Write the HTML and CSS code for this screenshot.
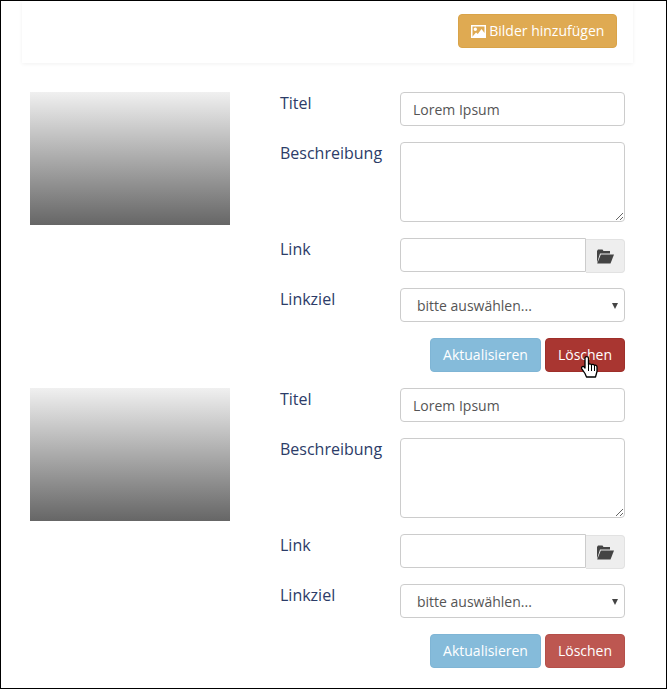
FILE: index.html
```html
<!DOCTYPE html>
<html lang="de">
<head>
  <meta charset="UTF-8">
  <meta name="viewport" content="width=device-width, initial-scale=1.0">
  <title>Bilder</title>
  <link rel="stylesheet" href="styles.css">
</head>
<body>
  <div class="frame">
    <div class="card">
      <button type="button" class="btn btn-add">
        <svg class="icon-picture" viewBox="0 0 15 13" width="15" height="13">
          <path fill="#fff" fill-rule="evenodd" d="M0 0h15v13H0zM1.500 1.500v10h12v-10zM2 11l3-3.500 1.800 1.600L10.500 4l3 4v3.500H2zM4.300 2.500a1.700 1.700 0 1 1 0 3.400a1.700 1.700 0 0 1 0-3.400z"/>
        </svg>
        Bilder hinzufügen
      </button>
    </div>

    <div class="item">
      <div class="thumb"></div>
      <form class="fields">
        <label>Titel</label>
        <input type="text" class="control" value="Lorem Ipsum">
        <label>Beschreibung</label>
        <textarea class="control control-area"></textarea>
        <label>Link</label>
        <div class="input-group">
          <input type="text" class="control">
          <span class="addon">
            <svg viewBox="0 0 18 15" width="18" height="15">
              <path fill="#444" d="M1 14V2L2 .5h4.500l1 1.500H14v2.500H4z"/>
              <path fill="#444" d="M4.800 5.500H18L14.500 14.500H1.200z"/>
            </svg>
          </span>
        </div>
        <label>Linkziel</label>
        <div class="select-wrap">
          <select class="control control-select"><option>bitte auswählen...</option></select>
        </div>
        <div class="actions">
          <button type="button" class="btn btn-update">Aktualisieren</button>
          <div class="hover-wrap">
            <button type="button" class="btn btn-delete is-hover">Löschen</button>
            <svg class="cursor" viewBox="0 0 17 22" width="17" height="22">
              <path fill="#fff" stroke="#000" stroke-width="1.300" stroke-linejoin="round" d="M4 2.200C4 .2 7.500 .2 7.500 2.200V8.500C8 7.500 10 7.500 10.500 9 11 8 13 8 13.500 9.500 14 9 16 9 16 11V15.500L14.500 21H5.500L4 17.500 .8 12.800C0 11 2 9.500 3 10.800L4 12z"/>
              <path stroke="#000" stroke-width="1" d="M7.500 8.500V15M10.500 9V15M13.500 9.500V15"/>
            </svg>
          </div>
        </div>
      </form>
    </div>

    <div class="item">
      <div class="thumb"></div>
      <form class="fields">
        <label>Titel</label>
        <input type="text" class="control" value="Lorem Ipsum">
        <label>Beschreibung</label>
        <textarea class="control control-area"></textarea>
        <label>Link</label>
        <div class="input-group">
          <input type="text" class="control">
          <span class="addon">
            <svg viewBox="0 0 18 15" width="18" height="15">
              <path fill="#444" d="M1 14V2L2 .5h4.500l1 1.500H14v2.500H4z"/>
              <path fill="#444" d="M4.800 5.500H18L14.500 14.500H1.200z"/>
            </svg>
          </span>
        </div>
        <label>Linkziel</label>
        <div class="select-wrap">
          <select class="control control-select"><option>bitte auswählen...</option></select>
        </div>
        <div class="actions">
          <button type="button" class="btn btn-update">Aktualisieren</button>
          <button type="button" class="btn btn-delete">Löschen</button>
        </div>
      </form>
    </div>
  </div>
</body>
</html>
```

FILE: styles.css
```css
html, body {
  margin: 0;
  padding: 0;
}
body {
  font-family: "Open Sans", Arial, sans-serif;
  font-size: 14px;
  color: #555;
  background: #fff;
}
.frame {
  box-sizing: border-box;
  width: 667px;
  height: 689px;
  border: 1px solid #000;
  overflow: hidden;
}
.card {
  box-sizing: border-box;
  width: 611px;
  height: 62px;
  margin-left: 21px;
  padding: 13px 16px 0 0;
  display: flex;
  justify-content: flex-end;
  align-items: flex-start;
  box-shadow: 0 1px 4px rgba(0, 0, 0, 0.06);
}
.btn {
  box-sizing: border-box;
  height: 34px;
  padding: 0 0 2px;
  border: 1px solid transparent;
  border-radius: 4px;
  font-family: inherit;
  font-size: 14px;
  color: #fff;
  white-space: nowrap;
}
.btn-add {
  width: 159px;
  background: #dfaa52;
  border-color: #d9a348;
}
.icon-picture {
  vertical-align: -2px;
}
.btn-update {
  width: 111px;
  background: #85bbda;
  border-color: #7fb5d5;
}
.btn-delete {
  width: 80px;
  background: #bd5751;
  border-color: #b54f49;
}
.btn-delete.is-hover {
  background: #a93631;
  border-color: #9e2f2a;
}
.item {
  display: flex;
  height: 296px;
  padding-left: 29px;
}
.card + .item {
  margin-top: 29px;
}
.thumb {
  width: 200px;
  height: 133px;
  margin-right: 50px;
  background: linear-gradient(#f0f0f0, #666666);
}
.fields {
  display: grid;
  grid-template-columns: 120px 225px;
  row-gap: 16px;
  align-content: start;
}
.fields label {
  font-size: 16px;
  line-height: 23px;
  color: #2c3c68;
}
.control {
  box-sizing: border-box;
  display: block;
  width: 100%;
  height: 34px;
  padding: 6px 12px;
  border: 1px solid #ccc;
  border-radius: 4px;
  background: #fff;
  color: #555;
  font-family: inherit;
  font-size: 14px;
}
.control-area {
  height: 80px;
  margin: 0;
  resize: vertical;
}
.input-group {
  display: flex;
  height: 34px;
}
.input-group .control {
  flex: 1;
  min-width: 0;
  border-radius: 4px 0 0 4px;
}
.addon {
  box-sizing: border-box;
  width: 39px;
  height: 34px;
  margin-top: 1px;
  display: flex;
  align-items: center;
  justify-content: center;
  background: #eee;
  border: 1px solid #e2e2e2;
  border-left: 0;
  border-radius: 0 4px 4px 0;
}
.select-wrap {
  position: relative;
}
.select-wrap::after {
  content: "";
  position: absolute;
  top: 15px;
  right: 7px;
  border-left: 3px solid transparent;
  border-right: 3px solid transparent;
  border-top: 6px solid #444;
}
.control-select {
  padding-left: 16px;
  appearance: none;
  -webkit-appearance: none;
}
.actions {
  grid-column: 2;
  display: flex;
  justify-content: flex-end;
  gap: 4px;
}
.hover-wrap {
  position: relative;
  display: flex;
}
.cursor {
  position: absolute;
  left: 36px;
  top: 18px;
}
```
